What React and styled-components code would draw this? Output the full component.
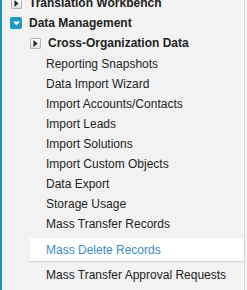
import React from "react";
import styled, { createGlobalStyle } from "styled-components";

const Global = createGlobalStyle`
  html, body { margin: 0; padding: 0; background: #f2f2f2; }
  body { font-family: Arial, "Liberation Sans", sans-serif; }
`;

const Frame = styled.div`
  width: 247px;
  height: 290px;
  overflow: hidden;
  background: #f2f2f2;
`;

const Panel = styled.div`
  width: 242px;
  height: 290px;
  border-left: 2px solid #1797c0;
  border-right: 1px solid #d9d9d9;
  box-shadow: inset -1px 0 0 #fafafa;
  box-sizing: content-box;
  overflow: hidden;
`;

const List = styled.ul`
  list-style: none;
  margin: -7px 0 0;
  padding: 0;
`;

const Row = styled.li`
  display: flex;
  align-items: center;
  height: 20px;
  padding-left: ${(p) => p.$indent}px;
  margin-bottom: ${(p) => p.$gap || 0}px;
  font-size: 12px;
  font-weight: ${(p) => (p.$bold ? 700 : 400)};
  color: #222;
  white-space: nowrap;
`;

const IconSlot = styled.span`
  display: inline-flex;
  justify-content: flex-end;
  width: 12px;
  margin-right: 7px;
`;

const GrayToggle = styled.span`
  display: inline-flex;
  align-items: center;
  justify-content: center;
  width: 9px;
  height: 9px;
  border: 1px solid #b5b5b5;
  border-radius: 1px;
  background: linear-gradient(#ffffff, #e2e2e2);
`;

const BlueToggle = styled.span`
  display: inline-flex;
  align-items: center;
  justify-content: center;
  width: 12px;
  height: 12px;
  border-radius: 2px;
  background: #1e98c8;
`;

const Selected = styled.li`
  display: flex;
  align-items: center;
  height: 23px;
  margin: 4px 0 4px 28px;
  padding-left: 16px;
  background: #ffffff;
  box-shadow: 0 1px 1px rgba(0, 0, 0, 0.12);
  font-size: 12px;
  color: #3b8dc6;
  white-space: nowrap;
`;

const Collapsed = () => (
  <GrayToggle>
    <svg width="5" height="7" viewBox="0 0 5 7">
      <path d="M0.5 0 L4.5 3.5 L0.5 7 Z" fill="#222" />
    </svg>
  </GrayToggle>
);

const Expanded = () => (
  <BlueToggle>
    <svg width="7" height="5" viewBox="0 0 7 5">
      <path d="M0 0.5 L7 0.5 L3.5 4.5 Z" fill="#fff" />
    </svg>
  </BlueToggle>
);

const subItems = [
  "Reporting Snapshots",
  "Data Import Wizard",
  "Import Accounts/Contacts",
  "Import Leads",
  "Import Solutions",
  "Import Custom Objects",
  "Data Export",
  "Storage Usage",
  "Mass Transfer Records",
];

export default function App() {
  return (
    <Frame>
      <Global />
      <Panel>
        <List>
          <Row $indent={8} $bold>
            <IconSlot><Collapsed /></IconSlot>
            Translation Workbench
          </Row>
          <Row $indent={8} $bold>
            <IconSlot><Expanded /></IconSlot>
            Data Management
          </Row>
          <Row $indent={27} $bold $gap={1}>
            <IconSlot><Collapsed /></IconSlot>
            Cross-Organization Data
          </Row>
          {subItems.map((s) => (
            <Row key={s} $indent={44}>{s}</Row>
          ))}
          <Selected>Mass Delete Records</Selected>
          <Row $indent={44}>Mass Transfer Approval Requests</Row>
        </List>
      </Panel>
    </Frame>
  );
}
